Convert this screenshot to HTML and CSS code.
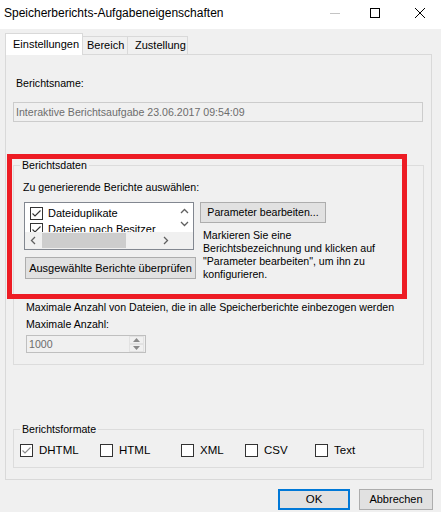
FILE: index.html
```html
<!DOCTYPE html>
<html>
<head>
<meta charset="utf-8">
<link rel="stylesheet" href="styles.css">
</head>
<body>
<div class="window">
  <div class="titlebar">
    <span class="title">Speicherberichts-Aufgabeneigenschaften</span>
    <div class="ctrls">
      <svg class="c-min" width="10" height="10" viewBox="0 0 10 10"><path d="M0 5.5H10" stroke="#c4c4c4" stroke-width="1"/></svg>
      <svg class="c-max" width="10" height="10" viewBox="0 0 10 10"><rect x="0.5" y="0.5" width="9" height="9" fill="none" stroke="#000" stroke-width="1"/></svg>
      <svg class="c-close" width="10" height="10" viewBox="0 0 10 10"><path d="M0 0L10 10M10 0L0 10" stroke="#000" stroke-width="1"/></svg>
    </div>
  </div>

  <div class="tabs">
    <div class="tab active">Einstellungen</div>
    <div class="tab t-bereich">Bereich</div>
    <div class="tab t-zust">Zustellung</div>
  </div>

  <div class="panel">
    <div class="lbl-name">Berichtsname:</div>
    <div class="textbox">Interaktive Berichtsaufgabe 23.06.2017 09:54:09</div>

    <div class="group group1">
      <div class="legend">Berichtsdaten</div>
      <div class="hint">Zu generierende Berichte auswählen:</div>
      <div class="row">
        <div class="leftcol">
          <div class="listbox">
            <div class="items">
              <div class="item">
                <svg width="13" height="13" viewBox="0 0 13 13"><rect x="0.5" y="0.5" width="12" height="12" fill="#fff" stroke="#333"/><path d="M2.5 6.5L5 9L10.5 3.5" fill="none" stroke="#333" stroke-width="1.1"/></svg>
                <span>Dateiduplikate</span>
              </div>
              <div class="item">
                <svg width="13" height="13" viewBox="0 0 13 13"><rect x="0.5" y="0.5" width="12" height="12" fill="#fff" stroke="#333"/><path d="M2.5 6.5L5 9L10.5 3.5" fill="none" stroke="#333" stroke-width="1.1"/></svg>
                <span>Dateien nach Besitzer</span>
              </div>
            </div>
            <div class="vscroll">
              <svg width="9" height="6" viewBox="0 0 9 6"><path d="M1 5L4.5 1.5L8 5" fill="none" stroke="#606060" stroke-width="1.3"/></svg>
              <svg width="9" height="6" viewBox="0 0 9 6"><path d="M1 1L4.5 4.5L8 1" fill="none" stroke="#606060" stroke-width="1.3"/></svg>
            </div>
            <div class="hscroll">
              <svg width="6" height="9" viewBox="0 0 6 9"><path d="M5 1L1.5 4.5L5 8" fill="none" stroke="#606060" stroke-width="1.3"/></svg>
              <div class="hthumb-track"><div class="hthumb"></div></div>
              <svg width="6" height="9" viewBox="0 0 6 9"><path d="M1 1L4.5 4.5L1 8" fill="none" stroke="#606060" stroke-width="1.3"/></svg>
            </div>
            <div class="corner"></div>
          </div>
          <div class="btn btn-check">Ausgewählte Berichte überprüfen</div>
        </div>
        <div class="rightcol">
          <div class="btn btn-param">Parameter bearbeiten...</div>
          <div class="desc">Markieren Sie eine<br>Berichtsbezeichnung und klicken auf<br>"Parameter bearbeiten", um ihn zu<br>konfigurieren.</div>
        </div>
      </div>
      <div class="max-text">Maximale Anzahl von Dateien, die in alle Speicherberichte einbezogen werden</div>
      <div class="max-label">Maximale Anzahl:</div>
      <div class="spin">
        <span class="spin-val">1000</span>
        <div class="spin-btns">
          <div class="spin-b"><svg width="7" height="4" viewBox="0 0 7 4"><path d="M0 4L3.5 0L7 4Z" fill="#8a8a8a"/></svg></div>
          <div class="spin-b"><svg width="7" height="4" viewBox="0 0 7 4"><path d="M0 0L3.5 4L7 0Z" fill="#8a8a8a"/></svg></div>
        </div>
      </div>
    </div>

    <div class="group group2">
      <div class="legend">Berichtsformate</div>
      <div class="formats">
        <div class="fmt">
          <svg width="13" height="13" viewBox="0 0 13 13"><rect x="0.5" y="0.5" width="12" height="12" fill="#fff" stroke="#333"/><path d="M2.5 6.5L5 9L10.5 3.5" fill="none" stroke="#8a8a8a" stroke-width="1.1"/></svg>
          <span>DHTML</span>
        </div>
        <div class="fmt">
          <svg width="13" height="13" viewBox="0 0 13 13"><rect x="0.5" y="0.5" width="12" height="12" fill="#fff" stroke="#333"/></svg>
          <span>HTML</span>
        </div>
        <div class="fmt">
          <svg width="13" height="13" viewBox="0 0 13 13"><rect x="0.5" y="0.5" width="12" height="12" fill="#fff" stroke="#333"/></svg>
          <span>XML</span>
        </div>
        <div class="fmt">
          <svg width="13" height="13" viewBox="0 0 13 13"><rect x="0.5" y="0.5" width="12" height="12" fill="#fff" stroke="#333"/></svg>
          <span>CSV</span>
        </div>
        <div class="fmt">
          <svg width="13" height="13" viewBox="0 0 13 13"><rect x="0.5" y="0.5" width="12" height="12" fill="#fff" stroke="#333"/></svg>
          <span>Text</span>
        </div>
      </div>
    </div>
  </div>

  <div class="buttons">
    <div class="btn btn-ok">OK</div>
    <div class="btn btn-cancel">Abbrechen</div>
  </div>

  <div class="annotation"></div>
</div>
</body>
</html>
```

FILE: styles.css
```css
* { box-sizing: border-box; }
html, body { margin: 0; padding: 0; }
body {
  width: 441px;
  height: 512px;
  background: #f0f0f0;
  font-family: "Liberation Sans", Arial, sans-serif;
  font-size: 10.6px;
  color: #000;
  overflow: hidden;
}
.window { position: relative; width: 441px; height: 512px; }

.titlebar {
  height: 29px;
  background: #fff;
  display: flex;
  align-items: flex-start;
  padding-left: 4px;
}
.title { font-size: 12px; line-height: 16px; margin-top: 5px; }
.ctrls { margin-left: auto; display: flex; padding-top: 8px; padding-right: 16px; }
.ctrls svg { display: block; }
.c-max { margin-left: 30px; }
.c-close { margin-left: 35px; }

.tabs {
  height: 25px;
  display: flex;
  align-items: flex-end;
  padding-left: 5px;
}
.tab {
  line-height: 13px;
  font-size: 11px;
  background: #f0f0f0;
  border-top: 1px solid #d9d9d9;
  border-right: 1px solid #d9d9d9;
  height: 18px;
  padding-top: 2px;
}
.tab.active {
  position: relative;
  z-index: 1;
  width: 78px;
  height: 22px;
  margin-bottom: -1px;
  background: #fff;
  border-left: 1px solid #d9d9d9;
  padding-top: 4px;
  padding-left: 7px;
}
.t-bereich { width: 45px; padding-left: 4px; }
.t-zust { width: 60px; padding-left: 7px; }

.panel {
  margin-left: 5px;
  width: 427px;
  height: 426px;
  border: 1px solid #d9d9d9;
  padding-left: 7px;
}
.lbl-name { margin: 22px 0 0 3px; line-height: 13px; }
.textbox {
  margin-top: 12px;
  width: 410px;
  height: 20px;
  border: 1px solid #cccccc;
  background: #f0f0f0;
  color: #6d6d6d;
  line-height: 18px;
  padding-left: 2px;
}

.group { width: 411px; border: 1px solid #dcdcdc; }
.legend {
  width: max-content;
  margin: -7px 0 0 6px;
  padding: 0 2px;
  background: #f0f0f0;
  line-height: 13px;
}
.group1 { margin-top: 43px; padding-bottom: 11px; }
.hint { margin: 9px 0 0 9px; line-height: 13px; }
.row { display: flex; margin: 8px 0 0 10px; height: 77px; }
.leftcol { width: 172px; }

.listbox {
  width: 170px;
  height: 48px;
  border: 1px solid #828790;
  background: #fff;
  display: grid;
  grid-template-columns: 1fr 17px;
  grid-template-rows: 1fr 17px;
}
.items { overflow: hidden; padding: 2px 0 0 5px; }
.item { display: flex; align-items: center; height: 16px; white-space: nowrap; }
.item svg { display: block; flex: none; }
.item span { margin-left: 5px; line-height: 13px; font-size: 11px; }
.vscroll {
  background: #fff;
  display: flex;
  flex-direction: column;
  align-items: center;
  padding-top: 5px;
  gap: 7px;
}
.vscroll svg, .hscroll svg { display: block; flex: none; }
.hscroll {
  background: #f0f0f0;
  display: flex;
  align-items: center;
  padding: 0 7px 0 5px;
}
.hthumb-track { flex: 1; height: 100%; padding: 1px 0; margin: 0 6px 0 6px; }
.hthumb { width: 84px; height: 100%; background: #cdcdcd; }
.corner { background: #f0f0f0; }

.btn {
  display: flex;
  align-items: center;
  justify-content: center;
  background: #e1e1e1;
  border: 1px solid #adadad;
  line-height: 13px;
  white-space: nowrap;
}
.btn-check { margin: 7px 0 0 1px; width: 171px; height: 22px; font-size: 11px; }
.rightcol { margin-left: 4px; }
.btn-param { width: 126px; height: 21px; }
.desc { margin: 6px 0 0 3px; line-height: 13px; white-space: nowrap; }

.max-text { margin: 22px 0 0 12px; line-height: 13px; }
.max-label { margin: 4px 0 0 12px; line-height: 13px; }
.spin {
  margin: 4px 0 0 12px;
  width: 120px;
  height: 18px;
  border: 1px solid #bfbfbf;
  display: flex;
  justify-content: space-between;
  padding: 0 1px 0 2px;
}
.spin-val { color: #6d6d6d; line-height: 16px; }
.spin-btns { width: 15px; display: flex; flex-direction: column; }
.spin-b {
  flex: 1;
  display: flex;
  align-items: center;
  justify-content: center;
  border: 1px solid #e2e2e2;
  background: #f0f0f0;
}
.spin-b svg { display: block; }

.group2 { margin-top: 64px; padding-bottom: 10px; }
.formats {
  display: grid;
  grid-template-columns: 80px 81px 64px 70px auto;
  margin: 8px 0 0 6px;
}
.fmt { display: flex; align-items: center; height: 13px; }
.fmt svg { display: block; flex: none; }
.fmt span { margin-left: 6px; line-height: 13px; font-size: 11.5px; }

.buttons {
  display: flex;
  justify-content: flex-end;
  margin-top: 9px;
  padding-right: 8px;
  gap: 9px;
}
.btn-ok { width: 72px; height: 21px; border: 2px solid #0078d7; font-size: 11.5px; }
.btn-cancel { width: 74px; height: 21px; font-size: 11px; }

.annotation {
  position: absolute;
  left: 7px;
  top: 154px;
  width: 400px;
  height: 145px;
  border: 5px solid #ed1c24;
}
```
